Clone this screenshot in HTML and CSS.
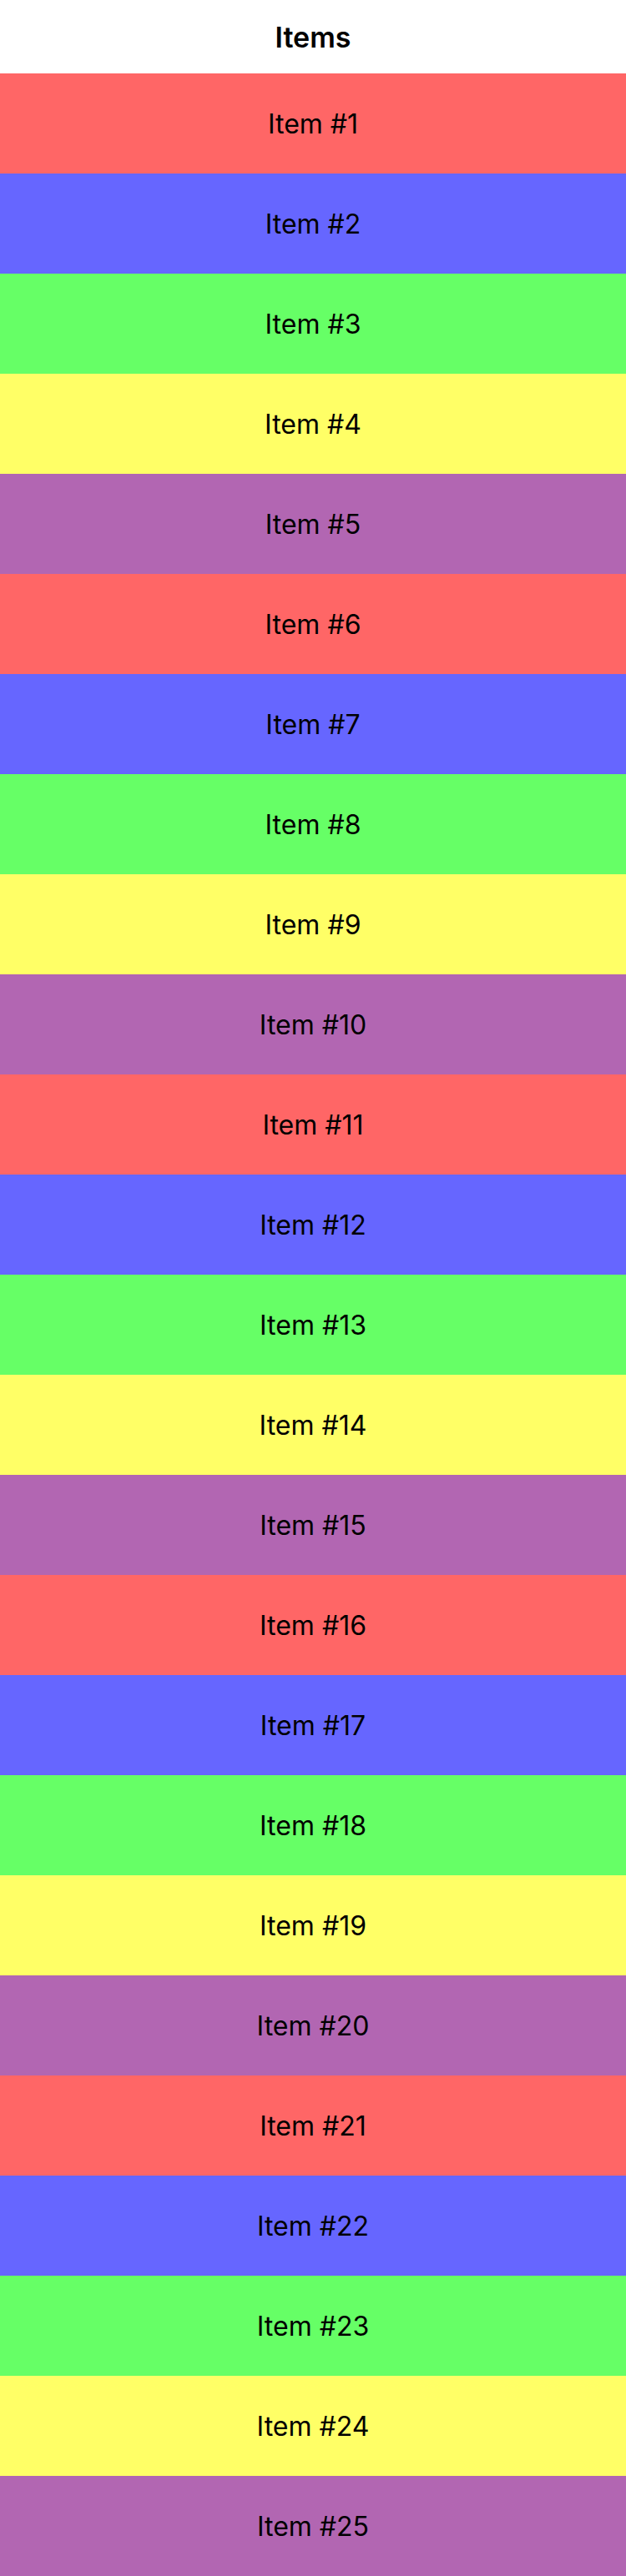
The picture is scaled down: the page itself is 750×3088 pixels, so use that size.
FILE: index.html
```html
<!DOCTYPE html>
<html>
<head>
<meta charset="utf-8">
<link rel="stylesheet" href="styles.css">
</head>
<body>
<header class="header">Items</header>
<main class="list">
<div class="row red">Item #1</div>
<div class="row blue">Item #2</div>
<div class="row green">Item #3</div>
<div class="row yellow">Item #4</div>
<div class="row purple">Item #5</div>
<div class="row red">Item #6</div>
<div class="row blue">Item #7</div>
<div class="row green">Item #8</div>
<div class="row yellow">Item #9</div>
<div class="row purple">Item #10</div>
<div class="row red">Item #11</div>
<div class="row blue">Item #12</div>
<div class="row green">Item #13</div>
<div class="row yellow">Item #14</div>
<div class="row purple">Item #15</div>
<div class="row red">Item #16</div>
<div class="row blue">Item #17</div>
<div class="row green">Item #18</div>
<div class="row yellow">Item #19</div>
<div class="row purple">Item #20</div>
<div class="row red">Item #21</div>
<div class="row blue">Item #22</div>
<div class="row green">Item #23</div>
<div class="row yellow">Item #24</div>
<div class="row purple">Item #25</div>
</main>
</body>
</html>
```
FILE: styles.css
```css
html, body {
  margin: 0;
  padding: 0;
  background: #ffffff;
  font-family: Inter, "Noto Sans", sans-serif;
  color: #000000;
}
.header {
  height: 88px;
  display: flex;
  align-items: center;
  justify-content: center;
  font-size: 34px;
  font-weight: 600;
  background: #ffffff;
}
.list {
  display: flex;
  flex-direction: column;
}
.row {
  height: 120px;
  display: flex;
  align-items: center;
  justify-content: center;
  font-size: 32px;
  font-weight: 400;
}
.red { background: #ff6666; }
.blue { background: #6666ff; }
.green { background: #66ff66; }
.yellow { background: #ffff66; }
.purple { background: #b266b2; }
```
